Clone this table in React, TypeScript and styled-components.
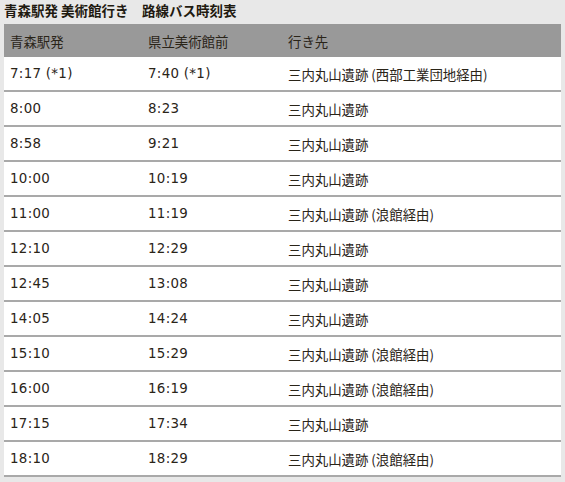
import React from "react";
import styled, { createGlobalStyle } from "styled-components";

const Global = createGlobalStyle`
  html, body { margin: 0; padding: 0; background: #e8e8e8; }
  body { font-family: "DejaVu Sans", "Noto Sans CJK JP", sans-serif; }
`;

const Page = styled.div`
  padding: 0 4px;
  width: 557px;
`;

const Title = styled.h1`
  margin: 0;
  height: 24px;
  line-height: 20px;
  font-size: 13.5px;
  font-weight: bold;
  color: #1f1a10;
  font-family: "Noto Sans CJK JP", sans-serif;
`;

const Table = styled.table`
  width: 557px;
  border-collapse: collapse;
  table-layout: fixed;
  font-size: 13px;
  color: #2a2418;
`;

const HeadCell = styled.th<{ $w?: number }>`
  width: ${(p) => (p.$w ? `${p.$w}px` : "auto")};
  height: 33px;
  padding: 0 0 0 6px;
  background: #999999;
  text-align: left;
  font-weight: normal;
  font-size: 13.4px;
  color: #2a2418;
  font-family: "Noto Sans CJK JP", sans-serif;
`;

const Row = styled.tr`
  background: #ffffff;
  border-bottom: 2px solid #a9a9a9;
`;

const Cell = styled.td<{ $jp?: boolean }>`
  height: 33px;
  padding: 0 0 0 6px;
  white-space: nowrap;
  font-size: 13.4px;
  letter-spacing: ${(p) => (p.$jp ? "0" : "0.3px")};
  font-family: ${(p) =>
    p.$jp ? `"Noto Sans CJK JP", sans-serif` : `"DejaVu Sans", "Noto Sans CJK JP", sans-serif`};
`;

const rows: [string, string, string][] = [
  ["7:17 (*1)", "7:40 (*1)", "三内丸山遺跡 (西部工業団地経由)"],
  ["8:00", "8:23", "三内丸山遺跡"],
  ["8:58", "9:21", "三内丸山遺跡"],
  ["10:00", "10:19", "三内丸山遺跡"],
  ["11:00", "11:19", "三内丸山遺跡 (浪館経由)"],
  ["12:10", "12:29", "三内丸山遺跡"],
  ["12:45", "13:08", "三内丸山遺跡"],
  ["14:05", "14:24", "三内丸山遺跡"],
  ["15:10", "15:29", "三内丸山遺跡 (浪館経由)"],
  ["16:00", "16:19", "三内丸山遺跡 (浪館経由)"],
  ["17:15", "17:34", "三内丸山遺跡"],
  ["18:10", "18:29", "三内丸山遺跡 (浪館経由)"],
];

export default function App() {
  return (
    <Page>
      <Global />
      <Title>青森駅発 美術館行き　路線バス時刻表</Title>
      <Table>
        <thead>
          <tr>
            <HeadCell $w={132}>青森駅発</HeadCell>
            <HeadCell $w={134}>県立美術館前</HeadCell>
            <HeadCell>行き先</HeadCell>
          </tr>
        </thead>
        <tbody>
          {rows.map((r, i) => (
            <Row key={i}>
              <Cell>{r[0]}</Cell>
              <Cell>{r[1]}</Cell>
              <Cell $jp>{r[2]}</Cell>
            </Row>
          ))}
        </tbody>
      </Table>
    </Page>
  );
}
